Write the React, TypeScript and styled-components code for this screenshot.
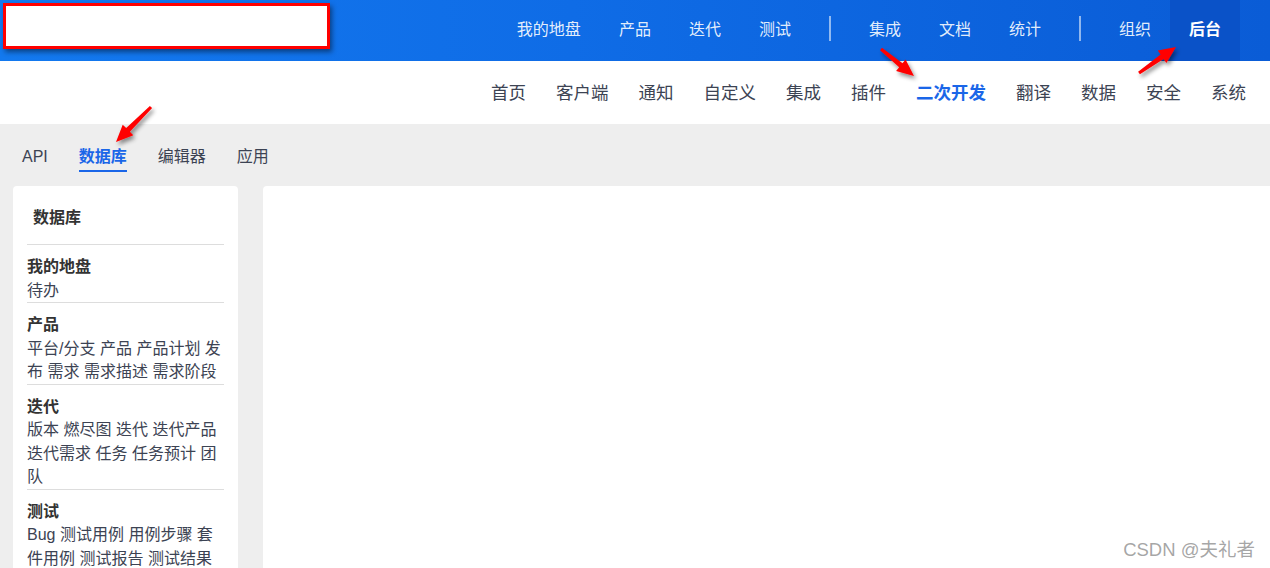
import styled, { createGlobalStyle } from 'styled-components';

const GlobalStyle = createGlobalStyle`
    html, body {
        margin: 0;
        padding: 0;
        height: 100%;
        overflow: hidden;
        background: #eeeeee;
    }
    * {
        box-sizing: border-box;
    }
    body {
        font-family: 'Liberation Sans', 'Noto Sans CJK SC', sans-serif;
    }
`;

const topNav = [
    ['我的地盘', '产品', '迭代', '测试'],
    ['集成', '文档', '统计'],
    ['组织', '后台'],
];

const subNav = ['首页', '客户端', '通知', '自定义', '集成', '插件', '二次开发', '翻译', '数据', '安全', '系统'];

const tabs = ['API', '数据库', '编辑器', '应用'];

const groups = [
    { title: '我的地盘', items: ['待办'] },
    { title: '产品', items: ['平台/分支', '产品', '产品计划', '发布', '需求', '需求描述', '需求阶段'] },
    { title: '迭代', items: ['版本', '燃尽图', '迭代', '迭代产品', '迭代需求', '任务', '任务预计', '团队'] },
    { title: '测试', items: ['Bug', '测试用例', '用例步骤', '套件用例', '测试报告', '测试结果'] },
];

// red annotation arrows: tail -> tip
const arrows = [
    { x1: 881, y1: 49, x2: 914, y2: 76 },
    { x1: 1139, y1: 73, x2: 1176, y2: 47 },
    { x1: 151, y1: 107, x2: 116, y2: 142 },
];

function arrowPoints(a: { x1: number; y1: number; x2: number; y2: number }) {
    const dx = a.x2 - a.x1;
    const dy = a.y2 - a.y1;
    const len = Math.sqrt(dx * dx + dy * dy);
    const ux = dx / len;
    const uy = dy / len;
    const nx = -uy;
    const ny = ux;
    const bx = a.x2 - ux * 17;
    const by = a.y2 - uy * 17;
    const pts = [
        [a.x1 + nx * 1.6, a.y1 + ny * 1.6],
        [bx + nx * 2.6, by + ny * 2.6],
        [bx + nx * 7.5, by + ny * 7.5],
        [a.x2, a.y2],
        [bx - nx * 7.5, by - ny * 7.5],
        [bx - nx * 2.6, by - ny * 2.6],
        [a.x1 - nx * 1.6, a.y1 - ny * 1.6],
    ];
    return pts.map((p) => `${p[0].toFixed(1)},${p[1].toFixed(1)}`).join(' ');
}

export default function App() {
    return (
        <Page>
            <GlobalStyle />
            <Header>
                <LogoBox />
                <TopNav>
                    {topNav.map((group, gi) => (
                        <TopGroup key={gi}>
                            {gi > 0 && <TopDivider />}
                            {group.map((label) => (
                                <TopItem key={label} $active={label === '后台'}>
                                    {label}
                                </TopItem>
                            ))}
                        </TopGroup>
                    ))}
                </TopNav>
            </Header>

            <SubBar>
                {subNav.map((label) => (
                    <SubItem key={label} $active={label === '二次开发'}>
                        {label}
                    </SubItem>
                ))}
            </SubBar>

            <Body>
                <Tabs>
                    {tabs.map((label) => (
                        <Tab key={label} $active={label === '数据库'}>
                            {label}
                        </Tab>
                    ))}
                </Tabs>

                <Content>
                    <Sidebar>
                        <SideTitle>数据库</SideTitle>
                        {groups.map((g) => (
                            <Group key={g.title}>
                                <GroupTitle>{g.title}</GroupTitle>
                                <GroupItems>
                                    {g.items.map((it, i) => (
                                        <span key={i}>
                                            {it}
                                            {i < g.items.length - 1 ? ' ' : ''}
                                        </span>
                                    ))}
                                </GroupItems>
                            </Group>
                        ))}
                    </Sidebar>
                    <MainPanel />
                </Content>
            </Body>

            <Watermark>CSDN @夫礼者</Watermark>

            <Overlay width="1270" height="568" viewBox="0 0 1270 568">
                <defs>
                    <filter id="arrowShadow" x="-50%" y="-50%" width="200%" height="200%">
                        <feDropShadow dx="2" dy="3" stdDeviation="2" floodColor="#000" floodOpacity="0.45" />
                    </filter>
                </defs>
                {arrows.map((a, i) => (
                    <polygon key={i} points={arrowPoints(a)} fill="#ff0000" filter="url(#arrowShadow)" />
                ))}
            </Overlay>
        </Page>
    );
}

const Page = styled.div`
    position: relative;
    width: 1270px;
    height: 568px;
    overflow: hidden;
    background: #eeeeee;
`;

const Header = styled.div`
    display: flex;
    justify-content: space-between;
    height: 61px;
    background: linear-gradient(90deg, #1379ef 0%, #0f6ce6 45%, #0a5cd6 100%);
`;

const LogoBox = styled.div`
    width: 327px;
    height: 46px;
    margin: 3px 0 0 3px;
    background: #ffffff;
    border: 3px solid #ff0000;
    box-shadow: 2px 3px 5px rgb(0 0 0 / 45%);
`;

const TopNav = styled.div`
    display: flex;
    align-items: stretch;
    margin-right: 30px;
`;

const TopGroup = styled.div`
    display: flex;
    align-items: center;
`;

const TopDivider = styled.div`
    width: 2px;
    height: 25px;
    margin: 0 19px 4px 19px;
    background: rgb(255 255 255 / 55%);
`;

const TopItem = styled.div<{ $active?: boolean }>`
    display: flex;
    align-items: center;
    height: 61px;
    padding: 0 19px 5px 19px;
    font-size: 16px;
    color: ${(p) => (p.$active ? '#ffffff' : 'rgb(255 255 255 / 90%)')};
    font-weight: ${(p) => (p.$active ? 'bold' : 'normal')};
    background: ${(p) => (p.$active ? '#0a52c8' : 'transparent')};
`;

const SubBar = styled.div`
    display: flex;
    justify-content: flex-end;
    align-items: center;
    height: 63px;
    padding-right: 9px;
    background: #ffffff;
`;

const SubItem = styled.div<{ $active?: boolean }>`
    padding: 0 15px;
    font-size: 17.5px;
    line-height: 24px;
    color: ${(p) => (p.$active ? '#1a66e8' : '#3c4353')};
    font-weight: ${(p) => (p.$active ? 'bold' : 'normal')};
`;

const Body = styled.div`
    background: #eeeeee;
`;

const Tabs = styled.div`
    display: flex;
    gap: 31px;
    padding: 21px 0 0 22px;
`;

const Tab = styled.div<{ $active?: boolean }>`
    font-size: 16px;
    line-height: 24px;
    padding-bottom: 1px;
    color: ${(p) => (p.$active ? '#1a66e8' : '#3c4353')};
    font-weight: ${(p) => (p.$active ? 'bold' : 'normal')};
    border-bottom: 2px solid ${(p) => (p.$active ? '#1a66e8' : 'transparent')};
`;

const Content = styled.div`
    display: flex;
    gap: 25px;
    padding: 14px 0 0 13px;
`;

const Sidebar = styled.div`
    width: 225px;
    height: 400px;
    flex-shrink: 0;
    padding: 20px 14px 0 14px;
    background: #ffffff;
    border-radius: 4px;
`;

const SideTitle = styled.div`
    padding: 0 6px 14px 6px;
    font-size: 16px;
    line-height: 24px;
    font-weight: bold;
    color: #333333;
    border-bottom: 1px solid #dddddd;
`;

const Group = styled.div`
    padding-top: 10px;
    border-bottom: 1px solid #dddddd;
`;

const GroupTitle = styled.div`
    font-size: 16px;
    line-height: 23.5px;
    font-weight: bold;
    color: #333333;
`;

const GroupItems = styled.div`
    font-size: 16px;
    line-height: 23.5px;
    color: #3c4353;
`;

const MainPanel = styled.div`
    flex: 1;
    height: 400px;
    background: #ffffff;
    border-radius: 4px 0 0 0;
`;

const Watermark = styled.div`
    position: absolute;
    right: 15px;
    bottom: 7px;
    font-size: 18.5px;
    line-height: 22px;
    color: rgb(150 150 150 / 85%);
`;

const Overlay = styled.svg`
    position: absolute;
    top: 0;
    left: 0;
    pointer-events: none;
`;
